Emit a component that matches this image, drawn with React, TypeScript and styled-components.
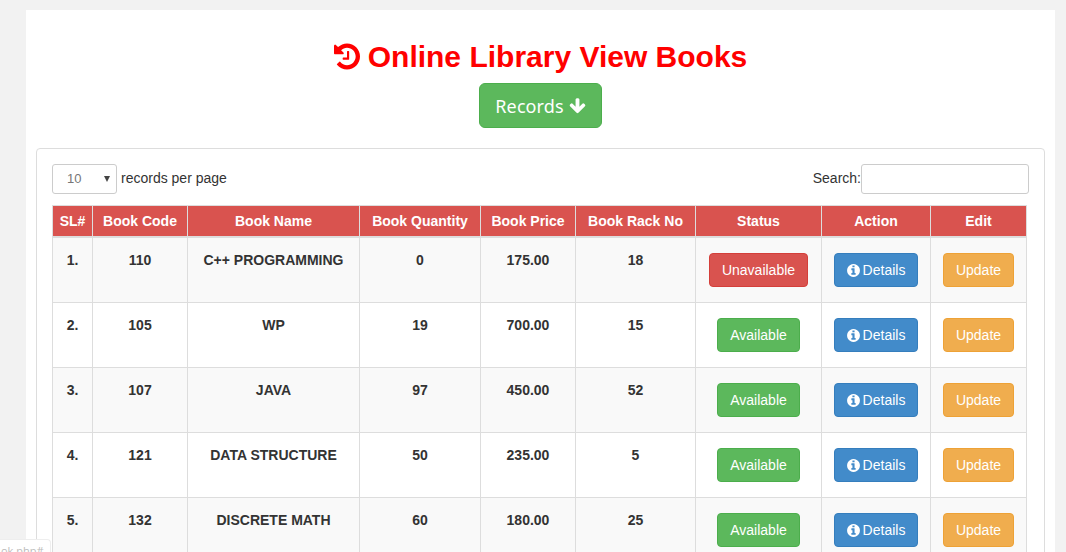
import React from "react";
import styled, { createGlobalStyle } from "styled-components";

const Global = createGlobalStyle`
  * { box-sizing: border-box; }
  html, body { margin: 0; height: 100%; overflow: hidden; }
  body {
    background: #f2f2f2;
    color: #333;
    font: 14px/20px "Liberation Sans", Arial, sans-serif;
  }
`;

const Page = styled.main`
  width: 1029px;
  height: 542px;
  margin: 10px 0 0 26px;
  padding: 0 10px;
  overflow: hidden;
  background: #fff;
`;

const Header = styled.header`
  display: flex;
  flex-direction: column;
  align-items: center;
  height: 138px;
  padding-top: 30px;
`;

const Title = styled.h1`
  display: flex;
  align-items: center;
  gap: 8px;
  margin: 0 0 10px;
  color: #f00;
  font-size: 30px;
  line-height: 33px;
  white-space: nowrap;
`;

const Glyph = styled.svg`
  display: block;
  flex: none;
  fill: currentColor;
`;

const RecordsButton = styled.button`
  display: flex;
  align-items: center;
  justify-content: center;
  gap: 5px;
  width: 123px;
  height: 45px;
  padding: 1px 0 0;
  border: 1px solid #4cae4c;
  border-radius: 6px;
  background: #5cb85c;
  color: #fff;
  font: 18px/24px "Comic Sans MS", "Noto Sans", sans-serif;
  letter-spacing: 0.1px;
`;

const Panel = styled.section`
  width: 1009px;
  height: 600px;
  padding: 15px;
  border: 1px solid #ddd;
  border-radius: 4px;
`;

const Controls = styled.div`
  display: flex;
  justify-content: space-between;
  height: 41px;
  line-height: 28px;
`;

const Field = styled.label`
  display: flex;
`;

const PageSize = styled.span`
  display: flex;
  align-items: center;
  justify-content: space-between;
  width: 65px;
  height: 30px;
  margin-right: 4px;
  padding: 0 6px 0 14px;
  border: 1px solid #ccc;
  border-radius: 3px;
  color: #777;
  font-size: 13px;
`;

const SearchInput = styled.input`
  width: 168px;
  height: 30px;
  border: 1px solid #ccc;
  border-radius: 3px;
  background: #fff;
`;

const Table = styled.div`
  width: 975px;
  border: 1px solid #ddd;
`;

const Row = styled.div<{ $kind: "head" | "odd" | "even" }>`
  display: grid;
  grid-template-columns: 40px 95px 172px 121px 95px 120px 126px 109px 95px;
  height: ${(p) => (p.$kind === "head" ? 32 : 65)}px;
  border-bottom: ${(p) => (p.$kind === "head" ? 2 : 1)}px solid #ddd;
  background: ${(p) => ({ head: "#d9534f", odd: "#f9f9f9", even: "#fff" })[p.$kind]};
  color: ${(p) => (p.$kind === "head" ? "#fff" : "#333")};
`;

const Cell = styled.div<{ $top?: number }>`
  padding-top: ${(p) => p.$top ?? 12}px;
  border-right: 1px solid #ddd;
  font-weight: bold;
  text-align: center;
  white-space: nowrap;
  &:last-child { border-right: 0; }
`;

const tones = {
  red: ["#d9534f", "#d43f3a"],
  green: ["#5cb85c", "#4cae4c"],
  blue: ["#428bca", "#357ebd"],
  amber: ["#f0ad4e", "#eea236"],
};

const Button = styled.button<{ $tone: keyof typeof tones; $width: number }>`
  display: inline-flex;
  align-items: center;
  justify-content: center;
  gap: 3px;
  width: ${(p) => p.$width}px;
  height: 34px;
  padding: 0;
  border: 1px solid ${(p) => tones[p.$tone][1]};
  border-radius: 4px;
  background: ${(p) => tones[p.$tone][0]};
  color: #fff;
  font: 14px/20px "Liberation Sans", Arial, sans-serif;
`;

const LinkStatus = styled.div`
  position: fixed;
  left: 0;
  bottom: 0;
  width: 51px;
  height: 13px;
  padding: 3px 0 0 1px;
  overflow: hidden;
  border: 1px solid #eee;
  border-width: 1px 1px 0 0;
  border-radius: 0 4px 0 0;
  background: #fff;
  color: #bbb;
  font: 11px/16px "Open Sans", sans-serif;
`;

const HistoryIcon = () => (
  <Glyph width="26" height="31" viewBox="0 0 1536 1792">
    <path d="M1536 896q0 156-61 298t-164 245-245 164-298 61q-172 0-327-72.5t-264-204.5q-7-10-6.5-22.5t8.5-20.5l137-138q10-9 25-9 16 2 23 12 73 95 179 147t225 52q104 0 198.5-40.5t163.5-109.5 109.5-163.5 40.5-198.5-40.5-198.5-109.5-163.5-163.5-109.5-198.5-40.5q-98 0-188 35.5t-160 101.5l137 138q31 30 14 69-17 40-59 40h-448q-26 0-45-19t-19-45v-448q0-42 40-59 39-17 69 14l130 129q107-101 244.5-156.5t284.5-55.5q156 0 298 61t245 164 164 245 61 298zm-640-288v448q0 14-9 23t-23 9h-320q-14 0-23-9t-9-23v-64q0-14 9-23t23-9h224v-352q0-14 9-23t23-9h64q14 0 23 9t9 23z" />
  </Glyph>
);

const ArrowIcon = () => (
  <Glyph width="17" height="18" viewBox="64 0 1664 1792">
    <path d="M1675 832q0 53-37 90l-651 652q-39 37-91 37-53 0-90-37l-651-652q-38-36-38-90 0-53 38-91l74-75q39-37 91-37 53 0 90 37l294 294v-704q0-52 38-90t90-38h128q52 0 90 38t38 90v704l294-294q37-37 90-37 52 0 91 37l75 75q37 39 37 91z" />
  </Glyph>
);

const InfoIcon = () => (
  <Glyph width="13" height="15" viewBox="0 0 1536 1792">
    <path d="M1024 1376v-160q0-14-9-23t-23-9h-96v-512q0-14-9-23t-23-9h-320q-14 0-23 9t-9 23v160q0 14 9 23t23 9h96v320h-96q-14 0-23 9t-9 23v160q0 14 9 23t23 9h448q14 0 23-9t9-23zm-128-896v-160q0-14-9-23t-23-9h-192q-14 0-23 9t-9 23v160q0 14 9 23t23 9h192q14 0 23-9t9-23zm640 416q0 209-103 385.5t-279.5 279.5-385.5 103-385.5-103-279.5-279.5-103-385.5 103-385.5 279.5-279.5 385.5-103 385.5 103 279.5 279.5 103 385.5z" />
  </Glyph>
);

const CaretIcon = () => (
  <Glyph width="6" height="6" viewBox="0 0 6 6" color="#444">
    <path d="M0 0h6L3 6z" />
  </Glyph>
);

const headings = ["SL#", "Book Code", "Book Name", "Book Quantity", "Book Price", "Book Rack No", "Status", "Action", "Edit"];

const books = [
  ["1.", "110", "C++ PROGRAMMING", "0", "175.00", "18"],
  ["2.", "105", "WP", "19", "700.00", "15"],
  ["3.", "107", "JAVA", "97", "450.00", "52"],
  ["4.", "121", "DATA STRUCTURE", "50", "235.00", "5"],
  ["5.", "132", "DISCRETE MATH", "60", "180.00", "25"],
];

export default function App() {
  return (
    <>
      <Global />
      <Page>
        <Header>
          <Title><HistoryIcon />Online Library View Books</Title>
          <RecordsButton>Records<ArrowIcon /></RecordsButton>
        </Header>
        <Panel>
          <Controls>
            <Field><PageSize>10<CaretIcon /></PageSize>records per page</Field>
            <Field>Search:<SearchInput /></Field>
          </Controls>
          <Table>
            <Row $kind="head">
              {headings.map((h) => <Cell key={h} $top={5}>{h}</Cell>)}
            </Row>
            {books.map((book, i) => {
              const inStock = book[3] !== "0";
              return (
                <Row key={book[0]} $kind={i % 2 ? "even" : "odd"}>
                  {book.map((value, c) => <Cell key={c}>{value}</Cell>)}
                  <Cell $top={15}>
                    <Button $tone={inStock ? "green" : "red"} $width={inStock ? 83 : 99}>
                      {inStock ? "Available" : "Unavailable"}
                    </Button>
                  </Cell>
                  <Cell $top={15}><Button $tone="blue" $width={84}><InfoIcon />Details</Button></Cell>
                  <Cell $top={15}><Button $tone="amber" $width={71}>Update</Button></Cell>
                </Row>
              );
            })}
          </Table>
        </Panel>
      </Page>
      <LinkStatus>ok.php#</LinkStatus>
    </>
  );
}
